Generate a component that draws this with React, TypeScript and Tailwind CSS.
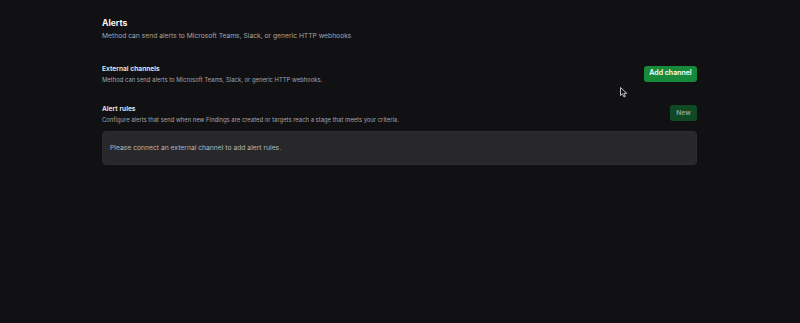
function Section({
  title,
  description,
  action,
}: {
  title: string;
  description: string;
  action: React.ReactNode;
}) {
  return (
    <div className="flex items-center justify-between">
      <div className="flex flex-col gap-px">
        <h2 className="text-[6.7px] leading-[10px] font-semibold text-[#ececee]">{title}</h2>
        <p className="text-[5.9px] leading-[10px] text-[#a3a3aa]">{description}</p>
      </div>
      {action}
    </div>
  );
}

function Cursor() {
  return (
    <svg
      className="absolute left-[620px] top-[87px]"
      width="8"
      height="11"
      viewBox="0 0 8 11"
      fill="none"
    >
      <path
        d="M0.5 0.5 L0.5 8.5 L2.5 6.8 L4 10 L5.3 9.4 L3.9 6.3 L6.8 6.3 Z"
        fill="#111113"
        stroke="#d4d4d8"
        strokeWidth="0.9"
        strokeLinejoin="round"
      />
    </svg>
  );
}

export default function App() {
  return (
    <div className="relative min-h-[323px] w-full bg-[#111113] font-[Inter,'Noto_Sans',sans-serif]">
      <div className="ml-[102px] flex w-[595px] flex-col pt-[17px]">
        <div className="flex flex-col gap-[2px]">
          <h1 className="text-[8.6px] leading-[12px] font-bold text-[#f4f4f5]">Alerts</h1>
          <p className="text-[6.73px] leading-[10px] text-[#a3a3aa]">
            Method can send alerts to Microsoft Teams, Slack, or generic HTTP webhooks
          </p>
        </div>

        <div className="mt-[23px]">
          <Section
            title="External channels"
            description="Method can send alerts to Microsoft Teams, Slack, or generic HTTP webhooks."
            action={
              <button className="-mt-[2px] h-[16px] w-[53px] rounded-[3px] bg-[#168a3a] text-[7px] font-semibold text-white">
                Add channel
              </button>
            }
          />
        </div>

        <div className="mt-[19px]">
          <Section
            title="Alert rules"
            description="Configure alerts that send when new Findings are created or targets reach a stage that meets your criteria."
            action={
              <button className="-mt-[3px] h-[16px] w-[27px] rounded-[3px] bg-[#0f4a25] text-[6.7px] font-semibold text-[#8ba394]">
                New
              </button>
            }
          />
        </div>

        <div className="mt-[6px] flex h-[34px] items-center rounded-[4px] border border-[#2c2c30] bg-[#28282b] px-[7px]">
          <p className="text-[6.75px] text-[#b4b4ba]">Please connect an external channel to add alert rules.</p>
        </div>
      </div>
      <Cursor />
    </div>
  );
}
